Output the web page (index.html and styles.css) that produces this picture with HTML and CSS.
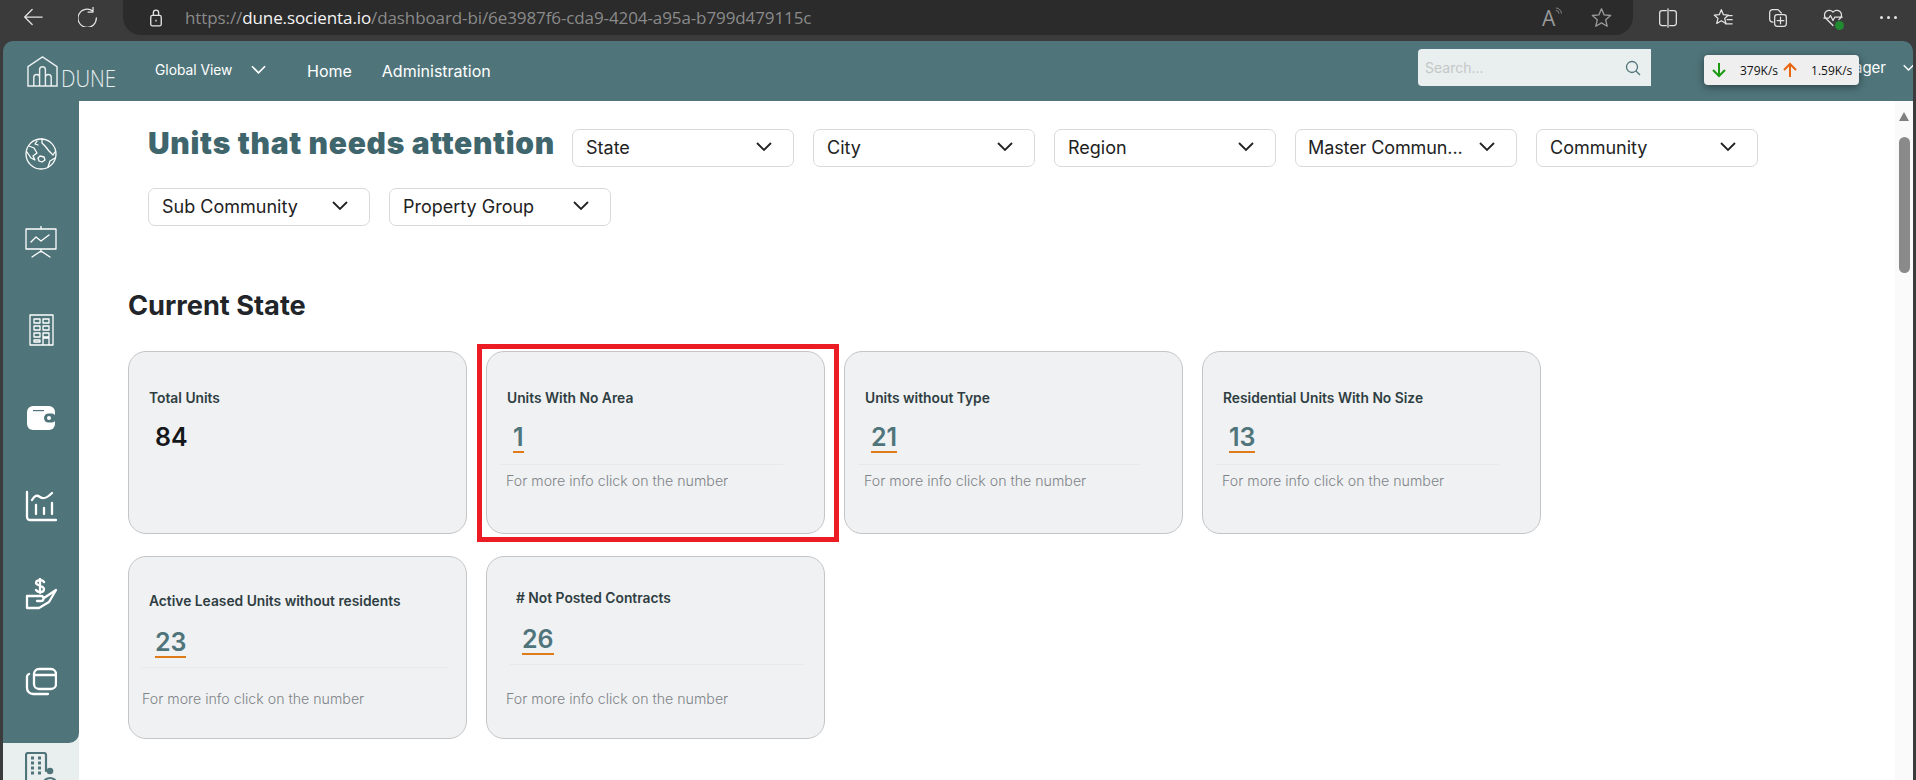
FILE: index.html
```html
<!DOCTYPE html>
<html lang="en">
<head>
<meta charset="utf-8">
<title>Dune</title>
<link rel="stylesheet" href="styles.css">
</head>
<body>
<div class="browser">
  <div class="tabbar">
    <svg class="bicon back" viewBox="0 0 24 24"><path d="M23 12H2M11 3l-9 9 9 9"/></svg>
    <svg class="bicon reload" viewBox="0 0 24 24"><path d="M18 5a11 11 0 1 0 4 8M18 0v6h-6"/></svg>
    <div class="address">
      <svg class="lock" viewBox="0 0 16 20"><rect x="2" y="7" width="12" height="12" rx="2"/><path d="M5 7V4a3 3 0 0 1 6 0v3M8 12v2"/></svg>
      <span class="url"><span class="dim">https://</span><span class="host">dune.socienta.io</span><span class="dim">/dashboard-bi/6e3987f6-cda9-4204-a95a-b799d479115c</span></span>
      <span class="addr-right">
        <span class="read">A<svg class="waves" viewBox="0 0 10 12"><path d="M1 4a4 4 0 0 1 4 4M1 1a7 7 0 0 1 7 7"/></svg></span>
        <svg class="bicon star" viewBox="0 0 24 24"><path d="M12 2l3 7 7.500 .7-5.700 4.900 1.700 7.400-6.500-3.900-6.500 3.900 1.700-7.400L1.500 9.700 9 9z"/></svg>
      </span>
    </div>
    <div class="tools">
      <svg class="bicon" viewBox="0 0 24 24"><path d="M10 3H5a3 3 0 0 0-3 3v12a3 3 0 0 0 3 3h5M14 3h5a3 3 0 0 1 3 3v12a3 3 0 0 1-3 3h-5M12 1v22"/></svg>
      <svg class="bicon" viewBox="0 0 24 24"><path d="M10 2l2.500 6 6 .5-4.500 4 1.500 6-5.500-3.300L4.500 18.500l1.500-6-4.500-4 6-.5zM17 9h6M17 14h6M15 19h8"/></svg>
      <svg class="bicon" viewBox="0 0 24 24"><path d="M6 17a4 4 0 0 1-4-4V6a4 4 0 0 1 4-4h6l4 4"/><rect x="8" y="8" width="14" height="14" rx="3"/><path d="M15 11v8M11 15h8"/></svg>
      <span class="health">
        <svg class="bicon" viewBox="0 0 24 24"><path d="M12 21L3 12a5.500 5.500 0 0 1 9-7 5.500 5.500 0 0 1 9 7l-2 2M1 12h6l2-3 3 6 2-4h9"/></svg>
        <i class="ok"></i>
      </span>
      <span class="dots"><i></i><i></i><i></i></span>
    </div>
  </div>
  <div class="app">
    <header class="topbar">
      <div class="logo">
        <svg class="logo-mark" viewBox="0 0 32 32"><path d="M1 11L16 1l15 10v20H1zM7 31V22a3 3 0 0 1 6 0v9M13 31V14a3 3 0 0 1 6 0v17M19 31V22a3 3 0 0 1 6 0v9"/></svg>
        <span class="logo-text">DUNE</span>
      </div>
      <a class="nav-view">Global View</a>
      <svg class="nav-chev" viewBox="0 0 16 10"><path d="M1 1l7 7 7-7"/></svg>
      <a class="nav-link home">Home</a>
      <a class="nav-link">Administration</a>
      <div class="search">
        <span>Search...</span>
        <svg viewBox="0 0 16 16"><circle cx="7" cy="7" r="5.500"/><path d="M11 11l4 4"/></svg>
      </div>
      <span class="user">Manager</span>
      <svg class="user-chev" viewBox="0 0 16 10"><path d="M1 1l7 7 7-7"/></svg>
      <div class="speed">
        <svg class="arrow down" viewBox="0 0 14 16"><path d="M7 1v13M1 8l6 6 6-6"/></svg>
        <span class="speed-val first">379K/s</span>
        <svg class="arrow up" viewBox="0 0 14 16"><path d="M7 15V2M1 8l6-6 6 6"/></svg>
        <span class="speed-val">1.59K/s</span>
      </div>
    </header>
    <div class="body">
      <aside class="side">
        <div class="side-main">
          <svg class="sicon" viewBox="0 0 32 32"><circle cx="16" cy="16" r="15"/><path d="M4 8l5 2 3 5-4 3 2 4-4-2-4-6M17 1v4l3 3 4 5 4 4 2-3M12 3l-2 3 3 1M13 20l2-2 4 1 1 3-3 2-3-1zM23 29l2-6 5-3"/></svg>
          <svg class="sicon" viewBox="0 0 32 32"><path d="M16 0v3M1 3h30v20H1zM16 23v3M7 31l9-6 9 6M6 16l5-5 5 4 8-6"/></svg>
          <svg class="sicon" viewBox="0 0 32 32"><path d="M5 1h23v30H5zM9 5h6v4H9zM18 5h6v4h-6zM9 12h6v4H9zM18 12h6v4h-6zM9 19h6v4H9zM18 19h6v4h-6zM9 26h6v2H9zM18 31V24h6v7"/></svg>
          <svg class="sicon fill" viewBox="0 0 32 32"><rect x="2" y="4" width="28" height="24" rx="6" fill="#fff"/><rect x="19" y="11.500" width="12" height="9" rx="4.500" fill="#4f757b"/><circle cx="24" cy="16" r="2" fill="#fff"/><rect x="8" y="8" width="11" height="1.200" fill="#4f757b"/></svg>
          <svg class="sicon thick" viewBox="0 0 32 32"><path d="M2 2v25a3 3 0 0 0 3 3h26M7 10c3-5 5-5 8-3s6 2 12-4M11 24v-9M19 24v-6M27 24v-11"/></svg>
          <svg class="sicon thick" viewBox="0 0 32 32"><path d="M2 18h14a2.500 2.500 0 0 1 0 5h-4M2 18v12h12l10-6 7-12-12 8M19 4c-2-3-8-2-8 1s8 2 8 6-6 4-8 1M15 0v15"/></svg>
          <svg class="sicon thick" viewBox="0 0 32 32"><rect x="9" y="3" width="22" height="20" rx="5"/><path d="M9 9h22M4 8a3 3 0 0 0-2 3v11a6 6 0 0 0 6 6h15"/></svg>
        </div>
        <div class="side-active">
          <svg class="sicon active" viewBox="0 0 32 32"><path d="M21 19V3a2 2 0 0 0-2-2H3a2 2 0 0 0-2 2v29"/><path class="win" d="M6 6h3M13 6h3M6 11h3M13 11h3M6 16h3M13 16h3M6 21h3M13 21h3"/><circle cx="25" cy="19" r="3.300" fill="#4f757b" stroke="none"/><path d="M19 31a6 5 0 0 1 12 0"/></svg>
        </div>
      </aside>
      <main class="main">
        <div class="filters">
          <h1 class="title">Units that needs attention</h1>
          <div class="select">State<svg viewBox="0 0 16 10"><path d="M1 1l7 7 7-7"/></svg></div>
          <div class="select">City<svg viewBox="0 0 16 10"><path d="M1 1l7 7 7-7"/></svg></div>
          <div class="select">Region<svg viewBox="0 0 16 10"><path d="M1 1l7 7 7-7"/></svg></div>
          <div class="select tight">Master Commun...<svg viewBox="0 0 16 10"><path d="M1 1l7 7 7-7"/></svg></div>
          <div class="select">Community<svg viewBox="0 0 16 10"><path d="M1 1l7 7 7-7"/></svg></div>
          <div class="select">Sub Community<svg viewBox="0 0 16 10"><path d="M1 1l7 7 7-7"/></svg></div>
          <div class="select">Property Group<svg viewBox="0 0 16 10"><path d="M1 1l7 7 7-7"/></svg></div>
        </div>
        <h2 class="section">Current State</h2>
        <div class="cards">
          <div class="card">
            <div class="card-title">Total Units</div>
            <div class="card-num plain">84</div>
          </div>
          <div class="card flagged">
            <div class="card-title">Units With No Area</div>
            <a class="card-num">1</a>
            <div class="card-rule"></div>
            <div class="card-note">For more info click on the number</div>
          </div>
          <div class="card">
            <div class="card-title">Units without Type</div>
            <a class="card-num">21</a>
            <div class="card-rule"></div>
            <div class="card-note">For more info click on the number</div>
          </div>
          <div class="card">
            <div class="card-title">Residential Units With No Size</div>
            <a class="card-num">13</a>
            <div class="card-rule"></div>
            <div class="card-note">For more info click on the number</div>
          </div>
          <div class="card leased">
            <div class="card-title">Active Leased Units without residents</div>
            <a class="card-num">23</a>
            <div class="card-rule"></div>
            <div class="card-note">For more info click on the number</div>
          </div>
          <div class="card posted">
            <div class="card-title">&#35; Not Posted Contracts</div>
            <a class="card-num">26</a>
            <div class="card-rule"></div>
            <div class="card-note">For more info click on the number</div>
          </div>
        </div>
      </main>
      <div class="scrollbar"><span class="sb-up"></span><span class="sb-thumb"></span></div>
    </div>
  </div>
</div>
</body>
</html>
```

FILE: styles.css
```css
* { box-sizing: border-box; }
html, body { margin: 0; height: 100%; overflow: hidden; }
body { font-family: Inter, "Liberation Sans", sans-serif; background: #3b3b3b; }
svg { fill: none; stroke: currentColor; flex: none; }
.browser { height: 780px; display: flex; flex-direction: column; }

.tabbar { height: 41px; flex: none; display: flex; align-items: flex-start; color: #e4e4e4; background: #3b3b3b; }
.bicon { width: 20px; height: 20px; stroke-width: 1.500; stroke-linecap: round; stroke-linejoin: round; }
.back { margin: 7px 0 0 23px; }
.reload { margin: 7px 0 0 35px; }
.address { margin-left: 25px; width: 1510px; height: 35px; background: #2b2b2b; border-radius: 0 0 18px 18px; display: flex; align-items: center; padding-left: 26px; }
.lock { width: 14px; height: 18px; stroke: #e4e4e4; stroke-width: 1.500; }
.url { margin-left: 22px; font: 17px "Open Sans", sans-serif; letter-spacing: -0.100px; white-space: nowrap; }
.dim { color: #8a8a8a; }
.host { color: #f4f4f4; }
.addr-right { margin-left: auto; margin-right: 21px; display: flex; align-items: center; gap: 30px; color: #999; }
.read { font: 21px "Open Sans", sans-serif; position: relative; width: 19px; }
.waves { position: absolute; left: 13px; top: 3px; width: 8px; height: 10px; stroke-width: 1; }
.star { width: 21px; height: 21px; }
.tools { display: flex; align-items: center; gap: 35px; margin-left: 25px; height: 35px; }
.health { position: relative; display: flex; }
.ok { position: absolute; right: -1px; bottom: -2px; width: 9px; height: 9px; border-radius: 50%; background: #1f8a2f; }
.dots { display: flex; gap: 4px; margin-left: 2px; }
.dots i { width: 3px; height: 3px; border-radius: 50%; background: #e4e4e4; }

.app { flex: 1; margin-left: 3px; margin-right: 3px; background: #4f757b; border-radius: 10px 10px 0 0; display: flex; flex-direction: column; min-height: 0; overflow: hidden; }
.topbar { height: 60px; display: flex; align-items: center; color: #fff; position: relative; flex: none; }
.logo { display: flex; align-items: flex-end; margin-left: 24px; height: 31px; width: 128px; flex: none; }
.logo-mark { width: 31px; height: 31px; stroke: #e9eeee; stroke-width: 1.500; }
.logo-text { font: 300 24px/22px "Open Sans", sans-serif; color: #e9eeee; margin: 0 0 -2px 3px; transform: scaleX(.85); transform-origin: left; }
.nav-view { font-size: 13.800px; margin-top: -3px; width: 96px; flex: none; white-space: nowrap; }
.nav-chev { width: 15px; height: 10px; stroke-width: 1.800; margin-top: -3px; }
.nav-link { font-size: 16px; white-space: nowrap; }
.nav-link.home { margin-left: 41px; margin-right: 30px; }
.search { position: absolute; left: 1415px; top: 8px; width: 233px; height: 37px; background: #e9eeee; border-radius: 4px 0 0 4px; display: flex; align-items: center; justify-content: space-between; padding: 0 10px 0 7px; color: #c4c8c8; font-size: 14px; }
.search svg { width: 16px; height: 16px; stroke: #4f757b; stroke-width: 1.300; }
.user { position: absolute; right: 27px; top: 17px; font-size: 15px; }
.user-chev { position: absolute; left: 1900px; top: 23px; width: 11px; height: 8px; stroke-width: 2; }
.speed { position: absolute; left: 1701px; top: 14px; width: 155px; height: 30px; background: #efefef; border-radius: 4px; box-shadow: 0 2px 8px rgba(0,0,0,.45); display: flex; align-items: center; padding: 0 8px; color: #111; font: 12px "Open Sans", sans-serif; white-space: nowrap; }
.arrow { width: 14px; height: 16px; stroke-width: 2; }
.arrow.down { color: #1b9a12; }
.arrow.up { color: #e8650f; }
.speed-val.first { margin: 0 5px 0 14px; }
.speed-val:last-child { margin-left: 14px; }

.body { flex: 1; display: flex; min-height: 0; background: #fff; }
.side { width: 76px; flex: none; display: flex; flex-direction: column; background: #e9eeee; align-self: stretch; }
.side-main { height: 642px; background: #4f757b; border-radius: 0 0 10px 0; display: flex; flex-direction: column; align-items: center; padding-top: 37px; gap: 56px; }
.side-active { flex: 1; display: flex; justify-content: center; padding-top: 9px; overflow: hidden; }
.sicon { width: 32px; height: 32px; color: #fff; stroke-width: 1.300; stroke-linecap: round; stroke-linejoin: round; }
.sicon.fill { stroke: none; }
.sicon.thick { stroke-width: 2.300; }
.sicon.active { color: #4f757b; stroke-width: 2.200; }
.win { stroke-width: 2.800; stroke-linecap: butt; }

.main { flex: 1; min-width: 0; padding: 28px 0 0 49px; }
.filters { display: flex; flex-wrap: wrap; align-items: flex-start; padding-left: 20px; column-gap: 19px; row-gap: 21px; width: 1640px; }
.title { margin: 0 0 10px; width: 405px; height: 28px; line-height: 28px; font-size: 30px; font-weight: 900; color: #3f666d; letter-spacing: .7px; white-space: nowrap; }
.select { width: 222px; height: 38px; border: 1px solid #d9d9d9; border-radius: 7px; padding: 0 21px 2px 13px; display: flex; align-items: center; justify-content: space-between; font-size: 18px; color: #222; white-space: nowrap; }
.select.tight { padding-left: 12px; letter-spacing: -.1px; }
.select svg { width: 16px; height: 10px; stroke: #222; stroke-width: 1.800; }
.section { margin: 65px 0 0; font-size: 27.200px; font-weight: 700; color: #212529; line-height: 30px; }
.cards { display: grid; grid-template-columns: repeat(4, 339px); gap: 22px 19px; margin-top: 30px; }
.card { height: 183px; border: 1px solid #c4c5c7; border-radius: 18px; background: #f0f1f3; padding: 38px 20px 0; position: relative; }
.card-title { font-size: 13.800px; font-weight: 600; color: #2f3e42; line-height: 16px; white-space: nowrap; }
.card-num { display: inline-block; margin: 18px 0 0 6px; font-size: 25px; font-weight: 600; line-height: 27px; color: #4f757b; border-bottom: 2px solid #e07b1a; }
.card-num.plain { display: block; color: #15181a; border: 0; }
.card-rule { border-top: 1px solid #e8e9ea; margin: 11px 21px 0 -7px; }
.card-note { font-size: 14.200px; font-weight: 300; color: #808488; margin: 7px 0 0 -1px; white-space: nowrap; }
.flagged::after { content: ""; position: absolute; left: -10px; right: -15px; top: -8px; bottom: -9px; border: 5px solid #ec1c24; pointer-events: none; }
.leased { padding-top: 36px; }
.leased .card-num { margin-top: 20px; }
.leased .card-rule { margin: 9px -2px 0 -7px; }
.leased .card-note { margin: 22px 0 0 -7px; }
.posted { padding-top: 33px; }
.posted .card-title { margin-left: 9px; }
.posted .card-num { margin: 20px 0 0 15px; }
.posted .card-rule { margin: 9px 0 0 3px; }
.posted .card-note { margin-top: 25px; }
.scrollbar { width: 18px; flex: none; background: #fafafa; display: flex; flex-direction: column; align-items: center; padding-top: 11px; }
.sb-up { width: 0; height: 0; flex: none; border: 5.500px solid transparent; border-top: 0; border-bottom: 9px solid #808080; }
.sb-thumb { width: 11px; height: 136px; margin-top: 16px; flex: none; background: #8a8a8a; border-radius: 5.500px; }
```
